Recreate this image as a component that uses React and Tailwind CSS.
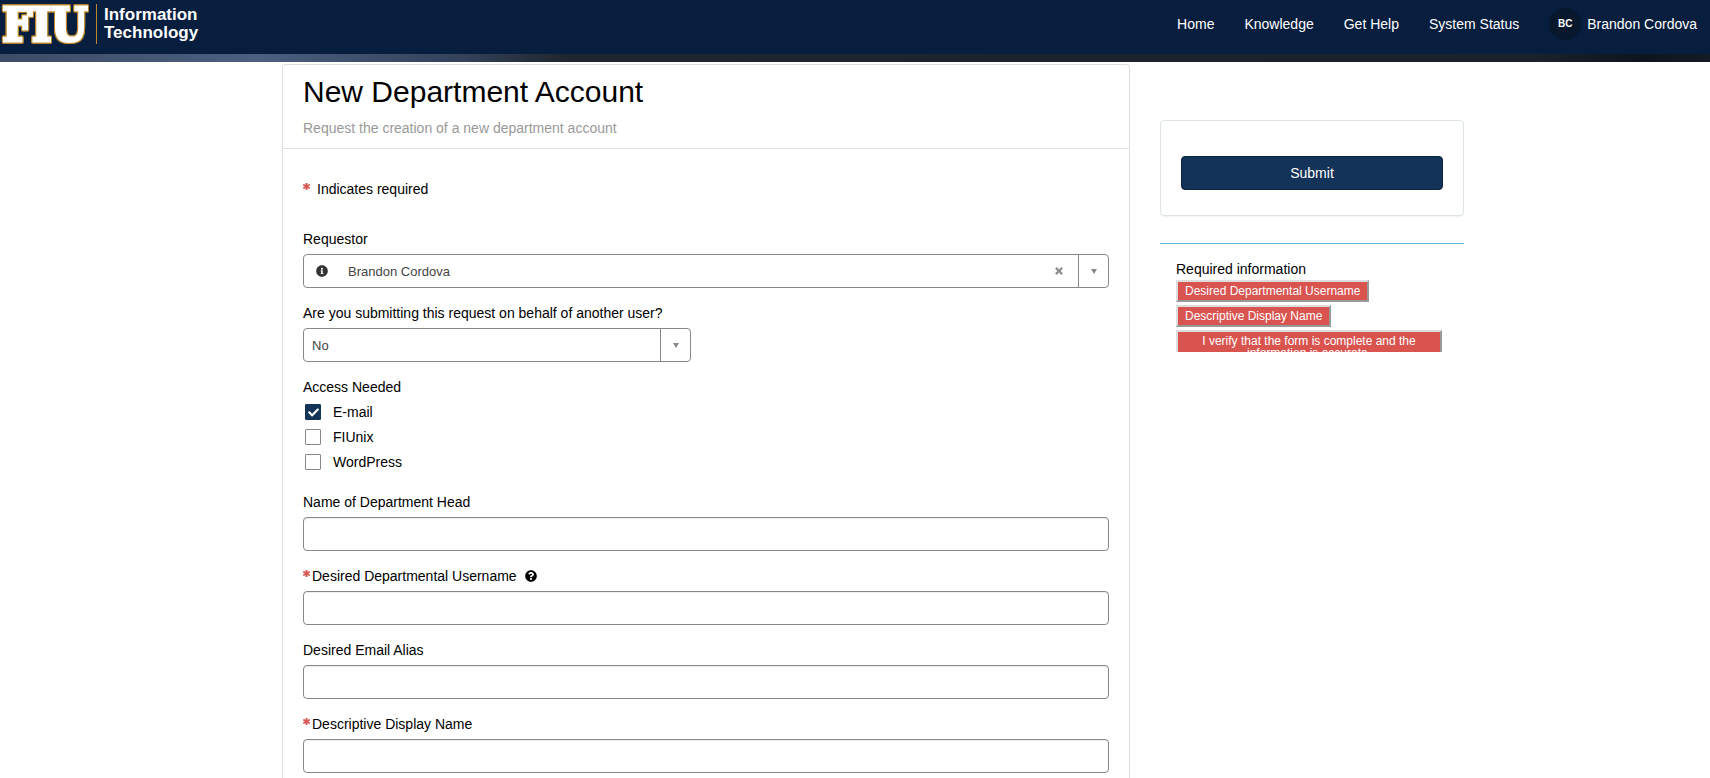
import { useState } from "react"
import { FaAsterisk, FaCheck, FaInfoCircle, FaQuestionCircle, FaTimes } from "react-icons/fa"

const NAV_LINKS = ["Home", "Knowledge", "Get Help", "System Status"]
const ACCESS_OPTIONS = ["E-mail", "FIUnix", "WordPress"]
const TEXT_FIELDS = [
    { id: "department_head", label: "Name of Department Head" },
    { id: "username", label: "Desired Departmental Username", required: true, help: true },
    { id: "email_alias", label: "Desired Email Alias" },
    { id: "display_name", label: "Descriptive Display Name", required: true },
]

function Logo() {
    return (
        <a href="#home" className="flex items-center text-white">
            <svg
                width="92"
                height="48"
                viewBox="0 0 92 48"
                className="overflow-visible [filter:drop-shadow(1px_0_0_#b8862b)_drop-shadow(-1px_0_0_#b8862b)_drop-shadow(0_1px_0_#b8862b)_drop-shadow(0_-1px_0_#b8862b)]"
            >
                <text
                    x="45"
                    y="41"
                    textAnchor="middle"
                    fontFamily="DejaVu Serif Condensed, DejaVu Serif, serif"
                    fontWeight="bold"
                    fontSize="46"
                    fill="#fff"
                    stroke="#fff"
                    strokeWidth="3"
                    strokeLinejoin="miter"
                >
                    FIU
                </text>
            </svg>
            <span className="ml-1 border-l border-[#b8862b] h-10 pl-[7px] flex items-center font-bold text-[17px] leading-[18px]">
                Information
                <br />
                Technology
            </span>
        </a>
    )
}

function Header() {
    return (
        <header>
            <div className="h-[54px] bg-[#081e3f] flex items-start justify-between pr-[13px]">
                <Logo />
                <nav className="flex items-center gap-[30px] h-12 text-white">
                    {NAV_LINKS.map((link) => (
                        <a key={link} href="#nav">
                            {link}
                        </a>
                    ))}
                    <a href="#profile" className="flex items-center gap-1.5">
                        <span className="size-8 rounded-full bg-[#07182d] flex items-center justify-center text-[10px] font-bold">BC</span>
                        Brandon Cordova
                    </a>
                </nav>
            </div>
            <div className="h-2 bg-[linear-gradient(90deg,#3d4c66_0%,#4b5f80_15%,#34425a_27%,#1f262e_33%,#1b212b_90%,#0e141b_96%,#151b22_100%)]" />
        </header>
    )
}

function RequiredMark() {
    return <FaAsterisk className="size-[7px] text-[#d9534f] stroke-[#d9534f] stroke-[50] mb-1.5" />
}

function Caret() {
    return (
        <svg width="6" height="5" viewBox="0 0 6 5" fill="#888" aria-hidden="true">
            <path d="M0 0h6L3 5z" />
        </svg>
    )
}

function RequestorField() {
    const [value, setValue] = useState("Brandon Cordova")

    return (
        <div>
            <label htmlFor="requestor" className="block mb-[5px]">
                Requestor
            </label>
            <div className="h-[34px] flex items-stretch border border-[#888] rounded text-[13px] text-[#444]">
                <button type="button" aria-label="Show requestor details" className="w-9 flex items-center justify-center text-[#333]">
                    <FaInfoCircle className="size-3" />
                </button>
                <input id="requestor" className="flex-1 min-w-0 pl-2 pt-0.5 outline-none" value={value} onChange={(e) => setValue(e.target.value)} />
                <button type="button" aria-label="Clear requestor" className="w-[38px] flex items-center justify-center text-[#888]" onClick={() => setValue("")}>
                    <FaTimes className="size-[10px] stroke-[#888] stroke-[30]" />
                </button>
                <button type="button" aria-label="Open requestor list" className="w-[30px] flex items-center justify-center border-l border-[#888]">
                    <Caret />
                </button>
            </div>
        </div>
    )
}

function BehalfField() {
    return (
        <div>
            <label htmlFor="behalf" className="block mb-[5px]">
                Are you submitting this request on behalf of another user?
            </label>
            <div className="relative w-97 max-w-full">
                <select id="behalf" className="appearance-none block w-full h-[34px] border border-[#888] rounded pl-2 pr-9 pt-0.5 text-[13px] text-[#444] bg-white">
                    <option>No</option>
                    <option>Yes</option>
                </select>
                <span className="absolute right-px inset-y-0 w-[30px] border-l border-[#888] flex items-center justify-center pointer-events-none">
                    <Caret />
                </span>
            </div>
        </div>
    )
}

function AccessField() {
    const [checked, setChecked] = useState(["E-mail"])

    const toggle = (name) => {
        setChecked(checked.includes(name) ? checked.filter((item) => item !== name) : [...checked, name])
    }

    return (
        <fieldset>
            <legend className="mb-[5px]">Access Needed</legend>
            <div className="flex flex-col items-start gap-[5px] pb-[5px]">
                {ACCESS_OPTIONS.map((name) => (
                    <label key={name} className="flex items-center pl-0.5">
                        <span className="relative size-4">
                            <input
                                type="checkbox"
                                className="peer appearance-none block size-4 border border-[#888] rounded-[1px] checked:bg-[#143358] checked:border-[#143358]"
                                checked={checked.includes(name)}
                                onChange={() => toggle(name)}
                            />
                            <FaCheck className="absolute inset-0 m-auto size-[11px] text-white hidden peer-checked:block pointer-events-none" />
                        </span>
                        <span className="pl-3">{name}</span>
                    </label>
                ))}
            </div>
        </fieldset>
    )
}

function TextField({ id, label, required, help }) {
    return (
        <div>
            <div className="flex items-center mb-[5px]">
                {required && <RequiredMark />}
                <label htmlFor={id} className={required ? "pl-0.5" : ""}>
                    {label}
                </label>
                {help && (
                    <button type="button" aria-label="Help" className="ml-2">
                        <FaQuestionCircle className="size-3" />
                    </button>
                )}
            </div>
            <input id={id} type="text" className="block w-full h-[34px] border border-[#888] rounded px-2 text-[13px] shadow-[inset_0_1px_1px_rgba(0,0,0,0.075)]" />
        </div>
    )
}

function Sidebar() {
    return (
        <aside className="w-[304px] shrink-0 pt-14">
            <div className="border border-[#dce3e5] rounded px-5 pt-[35px] pb-[25px] shadow-[0_1px_1px_rgba(0,0,0,0.05)]">
                <button type="submit" form="account-form" className="w-full h-[34px] rounded bg-[#143358] border border-[#0c2340] text-white">
                    Submit
                </button>
            </div>
            <div className="mt-[27px] border-t border-[#5bc0de] px-4 pt-[15px]">
                <h2>Required information</h2>
                <div className="flex flex-col items-start gap-[3px] pr-1.5 mt-px text-xs leading-3 text-white">
                    <a href="#username" className="h-[22px] border-2 border-[#ddd] border-r-[#999] border-b-[#999] bg-[#d9534f] px-[7px] pt-[3px]">
                        Desired Departmental Username
                    </a>
                    <a href="#display_name" className="h-[22px] border-2 border-[#ddd] border-r-[#999] border-b-[#999] bg-[#d9534f] px-[7px] pt-[3px]">
                        Descriptive Display Name
                    </a>
                    <a href="#verify" className="h-[22px] w-full overflow-hidden text-center border-2 border-b-0 border-[#ddd] border-r-[#999] bg-[#d9534f] px-[7px] pt-[3px]">
                        I verify that the form is complete and the information is accurate.
                    </a>
                </div>
            </div>
        </aside>
    )
}

export default function App() {
    return (
        <div className="min-h-screen flex flex-col bg-white text-black text-sm font-['Liberation_Sans',Arial,sans-serif]">
            <Header />
            <div className="flex-1 w-full max-w-[1218px] mx-auto pl-9 pt-0.5 flex gap-[30px]">
                <main className="flex-1 min-w-0 border border-b-0 border-[#ddd] rounded-t">
                    <div className="px-5 pt-[9px] pb-[10px] border-b border-[#dce3e5]">
                        <h1 className="text-3xl">New Department Account</h1>
                        <p className="mt-2 text-[#999]">Request the creation of a new department account</p>
                    </div>
                    <form id="account-form" className="px-5 pt-[30px] flex flex-col gap-[15px]" onSubmit={(e) => e.preventDefault()}>
                        <p className="flex items-center gap-[7px] mb-[15px]">
                            <RequiredMark />
                            Indicates required
                        </p>
                        <RequestorField />
                        <BehalfField />
                        <AccessField />
                        {TEXT_FIELDS.map((field) => (
                            <TextField key={field.id} {...field} />
                        ))}
                    </form>
                </main>
                <Sidebar />
            </div>
        </div>
    )
}
